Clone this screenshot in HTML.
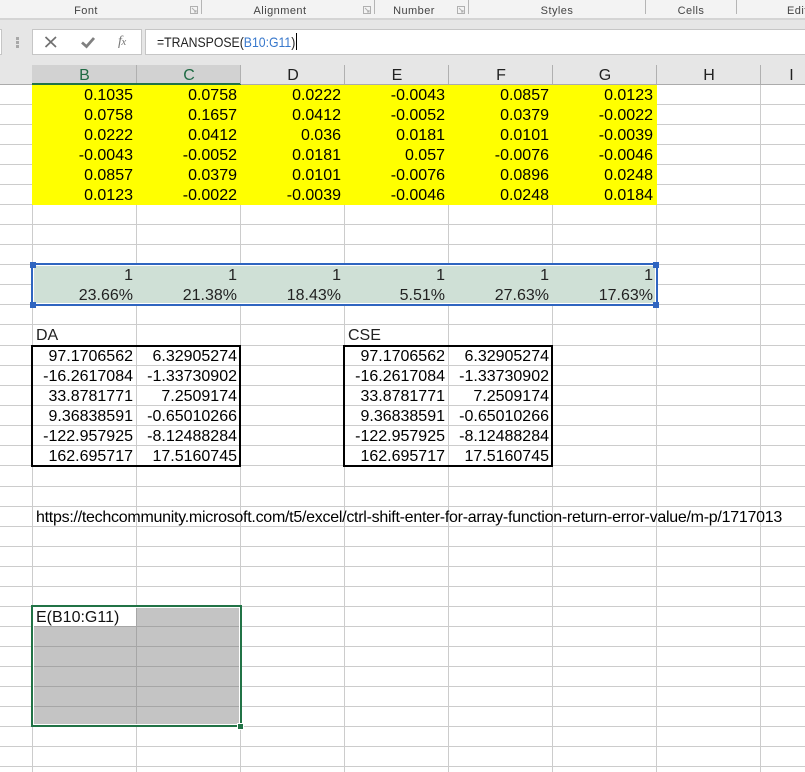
<!DOCTYPE html>
<html><head><meta charset="utf-8"><style>
html,body{margin:0;padding:0;background:#fff}
body{width:805px;height:772px;overflow:hidden;position:relative;font-family:"Liberation Sans",sans-serif;color:#000}
div{position:absolute;box-sizing:border-box}
.h{left:0;width:805px;height:1px;background:#ccc}
.v{width:1px;background:#ccc}
.r{left:32px;width:728px;height:20px;font-size:16px;line-height:22px;white-space:nowrap}
.r span{display:inline-block;width:104px;text-align:right;padding-right:3px;box-sizing:border-box}
.l{top:4px;font-size:11px;line-height:14px;color:#444;letter-spacing:.45px;white-space:nowrap;transform:translateX(-50%)}
.sep{top:0;width:1px;height:14px;background:#b5b5b5}
.ch{top:65px;height:19px;font-size:16px;line-height:22px;text-align:center;color:#222;width:104px}
.t{font-size:16px;line-height:22px;white-space:nowrap}
.bx{border:2px solid #000;background:none}
.hd{width:6px;height:6px;background:#2f65c0}
</style></head><body>
<!-- grid -->
<div class="h" style="top:104px"></div><div class="h" style="top:124px"></div><div class="h" style="top:144px"></div><div class="h" style="top:164px"></div><div class="h" style="top:184px"></div><div class="h" style="top:204px"></div><div class="h" style="top:224px"></div><div class="h" style="top:244px"></div><div class="h" style="top:264px"></div><div class="h" style="top:284px"></div><div class="h" style="top:304px"></div><div class="h" style="top:324px"></div><div class="h" style="top:345px"></div><div class="h" style="top:365px"></div><div class="h" style="top:385px"></div><div class="h" style="top:405px"></div><div class="h" style="top:425px"></div><div class="h" style="top:445px"></div><div class="h" style="top:465px"></div><div class="h" style="top:486px"></div><div class="h" style="top:506px"></div><div class="h" style="top:526px"></div><div class="h" style="top:546px"></div><div class="h" style="top:566px"></div><div class="h" style="top:586px"></div><div class="h" style="top:606px"></div><div class="h" style="top:626px"></div><div class="h" style="top:646px"></div><div class="h" style="top:666px"></div><div class="h" style="top:686px"></div><div class="h" style="top:706px"></div><div class="h" style="top:726px"></div><div class="h" style="top:746px"></div><div class="h" style="top:766px"></div>
<div class="v" style="left:32px;top:84px;height:688px"></div><div class="v" style="left:136px;top:84px;height:688px"></div><div class="v" style="left:240px;top:84px;height:688px"></div><div class="v" style="left:344px;top:84px;height:688px"></div><div class="v" style="left:448px;top:84px;height:688px"></div><div class="v" style="left:552px;top:84px;height:688px"></div><div class="v" style="left:656px;top:84px;height:688px"></div><div class="v" style="left:760px;top:84px;height:688px"></div>
<!-- ribbon -->
<div style="left:0;top:0;width:805px;height:18px;background:#f3f3f3"></div>
<div style="left:0;top:18px;width:805px;height:2px;background:#d4d4d4"></div>
<div style="left:0;top:20px;width:805px;height:64px;background:#e6e6e6"></div>
<div class="l" style="left:86px">Font</div><div class="l" style="left:280px">Alignment</div><div class="l" style="left:414px">Number</div><div class="l" style="left:557px">Styles</div><div class="l" style="left:691px">Cells</div><div class="l" style="left:787px;transform:none">Editing</div>
<div class="sep" style="left:201px"></div><div class="sep" style="left:374px"></div><div class="sep" style="left:468px"></div><div class="sep" style="left:645px"></div><div class="sep" style="left:736px"></div>
<svg style="position:absolute;left:0;top:0" width="805" height="20" fill="none" stroke="#b0b0b0"><path d="M190.500 6.500h7v7h-7zM192 8l4 4M196 10v2h-2"/><path d="M363.500 6.500h7v7h-7zM365 8l4 4M369 10v2h-2"/><path d="M457.500 6.500h7v7h-7zM459 8l4 4M463 10v2h-2"/></svg>
<!-- formula bar -->
<div style="left:-2px;top:29px;width:4px;height:26px;background:#fff;border:1px solid #c6c6c6"></div>
<div style="left:16px;top:37px;width:3px;height:3px;background:#a8a8a8"></div><div style="left:16px;top:41px;width:3px;height:3px;background:#a8a8a8"></div><div style="left:16px;top:45px;width:3px;height:3px;background:#a8a8a8"></div>
<div style="left:32px;top:29px;width:110px;height:26px;background:#fff;border:1px solid #c6c6c6"></div>
<div style="left:145px;top:29px;width:662px;height:26px;background:#fff;border:1px solid #c6c6c6"></div>
<svg style="position:absolute;left:32px;top:29px" width="110" height="26" fill="none"><path d="M13.500 8l10.500 10M24 8L13.500 18" stroke="#707070" stroke-width="1.700"/><path d="M50 13.500l4.500 4L62 9" stroke="#808080" stroke-width="2.800"/></svg>
<div style="left:118px;top:34px;font:italic 14px/16px 'Liberation Serif',serif;color:#777;letter-spacing:-.5px">f<span style="font-size:11px">x</span></div>
<div style="left:157px;top:33px;font-size:14px;line-height:18px;color:#222;white-space:nowrap;transform:scaleX(.875);transform-origin:0 0">=TRANSPOSE(<span style="color:#3878cc">B10:G11</span>)</div>
<div style="left:296px;top:33px;width:1px;height:17px;background:#000"></div>
<!-- col headers -->
<div style="left:32px;top:65px;width:208px;height:19px;background:#d2d2d2"></div>
<div style="left:32px;top:83px;width:209px;height:2px;background:#217346"></div>
<div style="left:0;top:84px;width:32px;height:1px;background:#ababab"></div>
<div style="left:241px;top:84px;width:564px;height:1px;background:#ababab"></div>
<div class="sep" style="left:136px;top:65px;height:18px;background:#b0b0b0"></div><div class="sep" style="left:240px;top:65px;height:19px;background:#b0b0b0"></div><div class="sep" style="left:344px;top:65px;height:19px;background:#b0b0b0"></div><div class="sep" style="left:448px;top:65px;height:19px;background:#b0b0b0"></div><div class="sep" style="left:552px;top:65px;height:19px;background:#b0b0b0"></div><div class="sep" style="left:656px;top:65px;height:19px;background:#b0b0b0"></div><div class="sep" style="left:760px;top:65px;height:19px;background:#b0b0b0"></div>
<div class="ch" style="left:32.500px;color:#1f6a44">B</div><div class="ch" style="left:137px;color:#1f6a44">C</div><div class="ch" style="left:241px">D</div><div class="ch" style="left:345px">E</div><div class="ch" style="left:449px">F</div><div class="ch" style="left:553px">G</div><div class="ch" style="left:657px">H</div><div class="ch" style="left:760px;width:63px">I</div>
<!-- yellow -->
<div style="left:32px;top:85px;width:625px;height:120px;background:#ff0"></div>
<div class="r" style="top:85px"><span>0.1035</span><span>0.0758</span><span>0.0222</span><span>-0.0043</span><span>0.0857</span><span>0.0123</span></div>
<div class="r" style="top:105px"><span>0.0758</span><span>0.1657</span><span>0.0412</span><span>-0.0052</span><span>0.0379</span><span>-0.0022</span></div>
<div class="r" style="top:125px"><span>0.0222</span><span>0.0412</span><span>0.036</span><span>0.0181</span><span>0.0101</span><span>-0.0039</span></div>
<div class="r" style="top:145px"><span>-0.0043</span><span>-0.0052</span><span>0.0181</span><span>0.057</span><span>-0.0076</span><span>-0.0046</span></div>
<div class="r" style="top:165px"><span>0.0857</span><span>0.0379</span><span>0.0101</span><span>-0.0076</span><span>0.0896</span><span>0.0248</span></div>
<div class="r" style="top:185px"><span>0.0123</span><span>-0.0022</span><span>-0.0039</span><span>-0.0046</span><span>0.0248</span><span>0.0184</span></div>
<!-- blue range -->
<div style="left:31px;top:263px;width:627px;height:43px;background:#cfe0d6;border:2px solid #2f65c0;box-shadow:inset 0 0 0 1px #fff"></div>
<div class="r" style="top:265px;color:#222"><span>1</span><span>1</span><span>1</span><span>1</span><span>1</span><span>1</span></div>
<div class="r" style="top:285px;color:#222"><span>23.66%</span><span>21.38%</span><span>18.43%</span><span>5.51%</span><span>27.63%</span><span>17.63%</span></div>
<div class="hd" style="left:30px;top:262px"></div><div class="hd" style="left:30px;top:302px"></div><div class="hd" style="left:653px;top:262px"></div><div class="hd" style="left:653px;top:302px"></div>
<!-- DA/CSE -->
<div class="t" style="left:36px;top:325px;color:#222">DA</div>
<div class="t" style="left:348px;top:325px;color:#222">CSE</div>
<div class="bx" style="left:31px;top:345px;width:210px;height:122px"></div>
<div class="bx" style="left:343px;top:345px;width:210px;height:122px"></div>
<div class="r" style="top:346px;left:32px"><span>97.1706562</span><span>6.32905274</span></div>
<div class="r" style="top:366px;left:32px"><span>-16.2617084</span><span>-1.33730902</span></div>
<div class="r" style="top:386px;left:32px"><span>33.8781771</span><span>7.2509174</span></div>
<div class="r" style="top:406px;left:32px"><span>9.36838591</span><span>-0.65010266</span></div>
<div class="r" style="top:426px;left:32px"><span>-122.957925</span><span>-8.12488284</span></div>
<div class="r" style="top:446px;left:32px"><span>162.695717</span><span>17.5160745</span></div>
<div class="r" style="top:346px;left:344px"><span>97.1706562</span><span>6.32905274</span></div>
<div class="r" style="top:366px;left:344px"><span>-16.2617084</span><span>-1.33730902</span></div>
<div class="r" style="top:386px;left:344px"><span>33.8781771</span><span>7.2509174</span></div>
<div class="r" style="top:406px;left:344px"><span>9.36838591</span><span>-0.65010266</span></div>
<div class="r" style="top:426px;left:344px"><span>-122.957925</span><span>-8.12488284</span></div>
<div class="r" style="top:446px;left:344px"><span>162.695717</span><span>17.5160745</span></div>
<div class="t" style="left:36px;top:507px;letter-spacing:-.27px">https://techcommunity.microsoft.com/t5/excel/ctrl-shift-enter-for-array-function-return-error-value/m-p/1717013</div>
<!-- green selection -->
<div style="left:31px;top:605px;width:211px;height:122px;background:#c4c4c4;border:2px solid #217346;box-shadow:inset 0 0 0 1px #fff"></div>
<div style="left:34px;top:608px;width:102px;height:18px;background:#fff"></div>
<div style="left:136px;top:608px;width:1px;height:116px;background:#a6a6a6"></div>
<div style="left:34px;top:626px;width:205px;height:1px;background:#a6a6a6"></div><div style="left:34px;top:646px;width:205px;height:1px;background:#a6a6a6"></div><div style="left:34px;top:666px;width:205px;height:1px;background:#a6a6a6"></div><div style="left:34px;top:686px;width:205px;height:1px;background:#a6a6a6"></div><div style="left:34px;top:706px;width:205px;height:1px;background:#a6a6a6"></div>
<div style="left:238px;top:724px;width:5px;height:5px;background:#217346;box-shadow:0 0 0 1px #fff"></div>
<div class="t" style="left:36px;top:607px;color:#111">E(B10:G11)</div>
</body></html>
